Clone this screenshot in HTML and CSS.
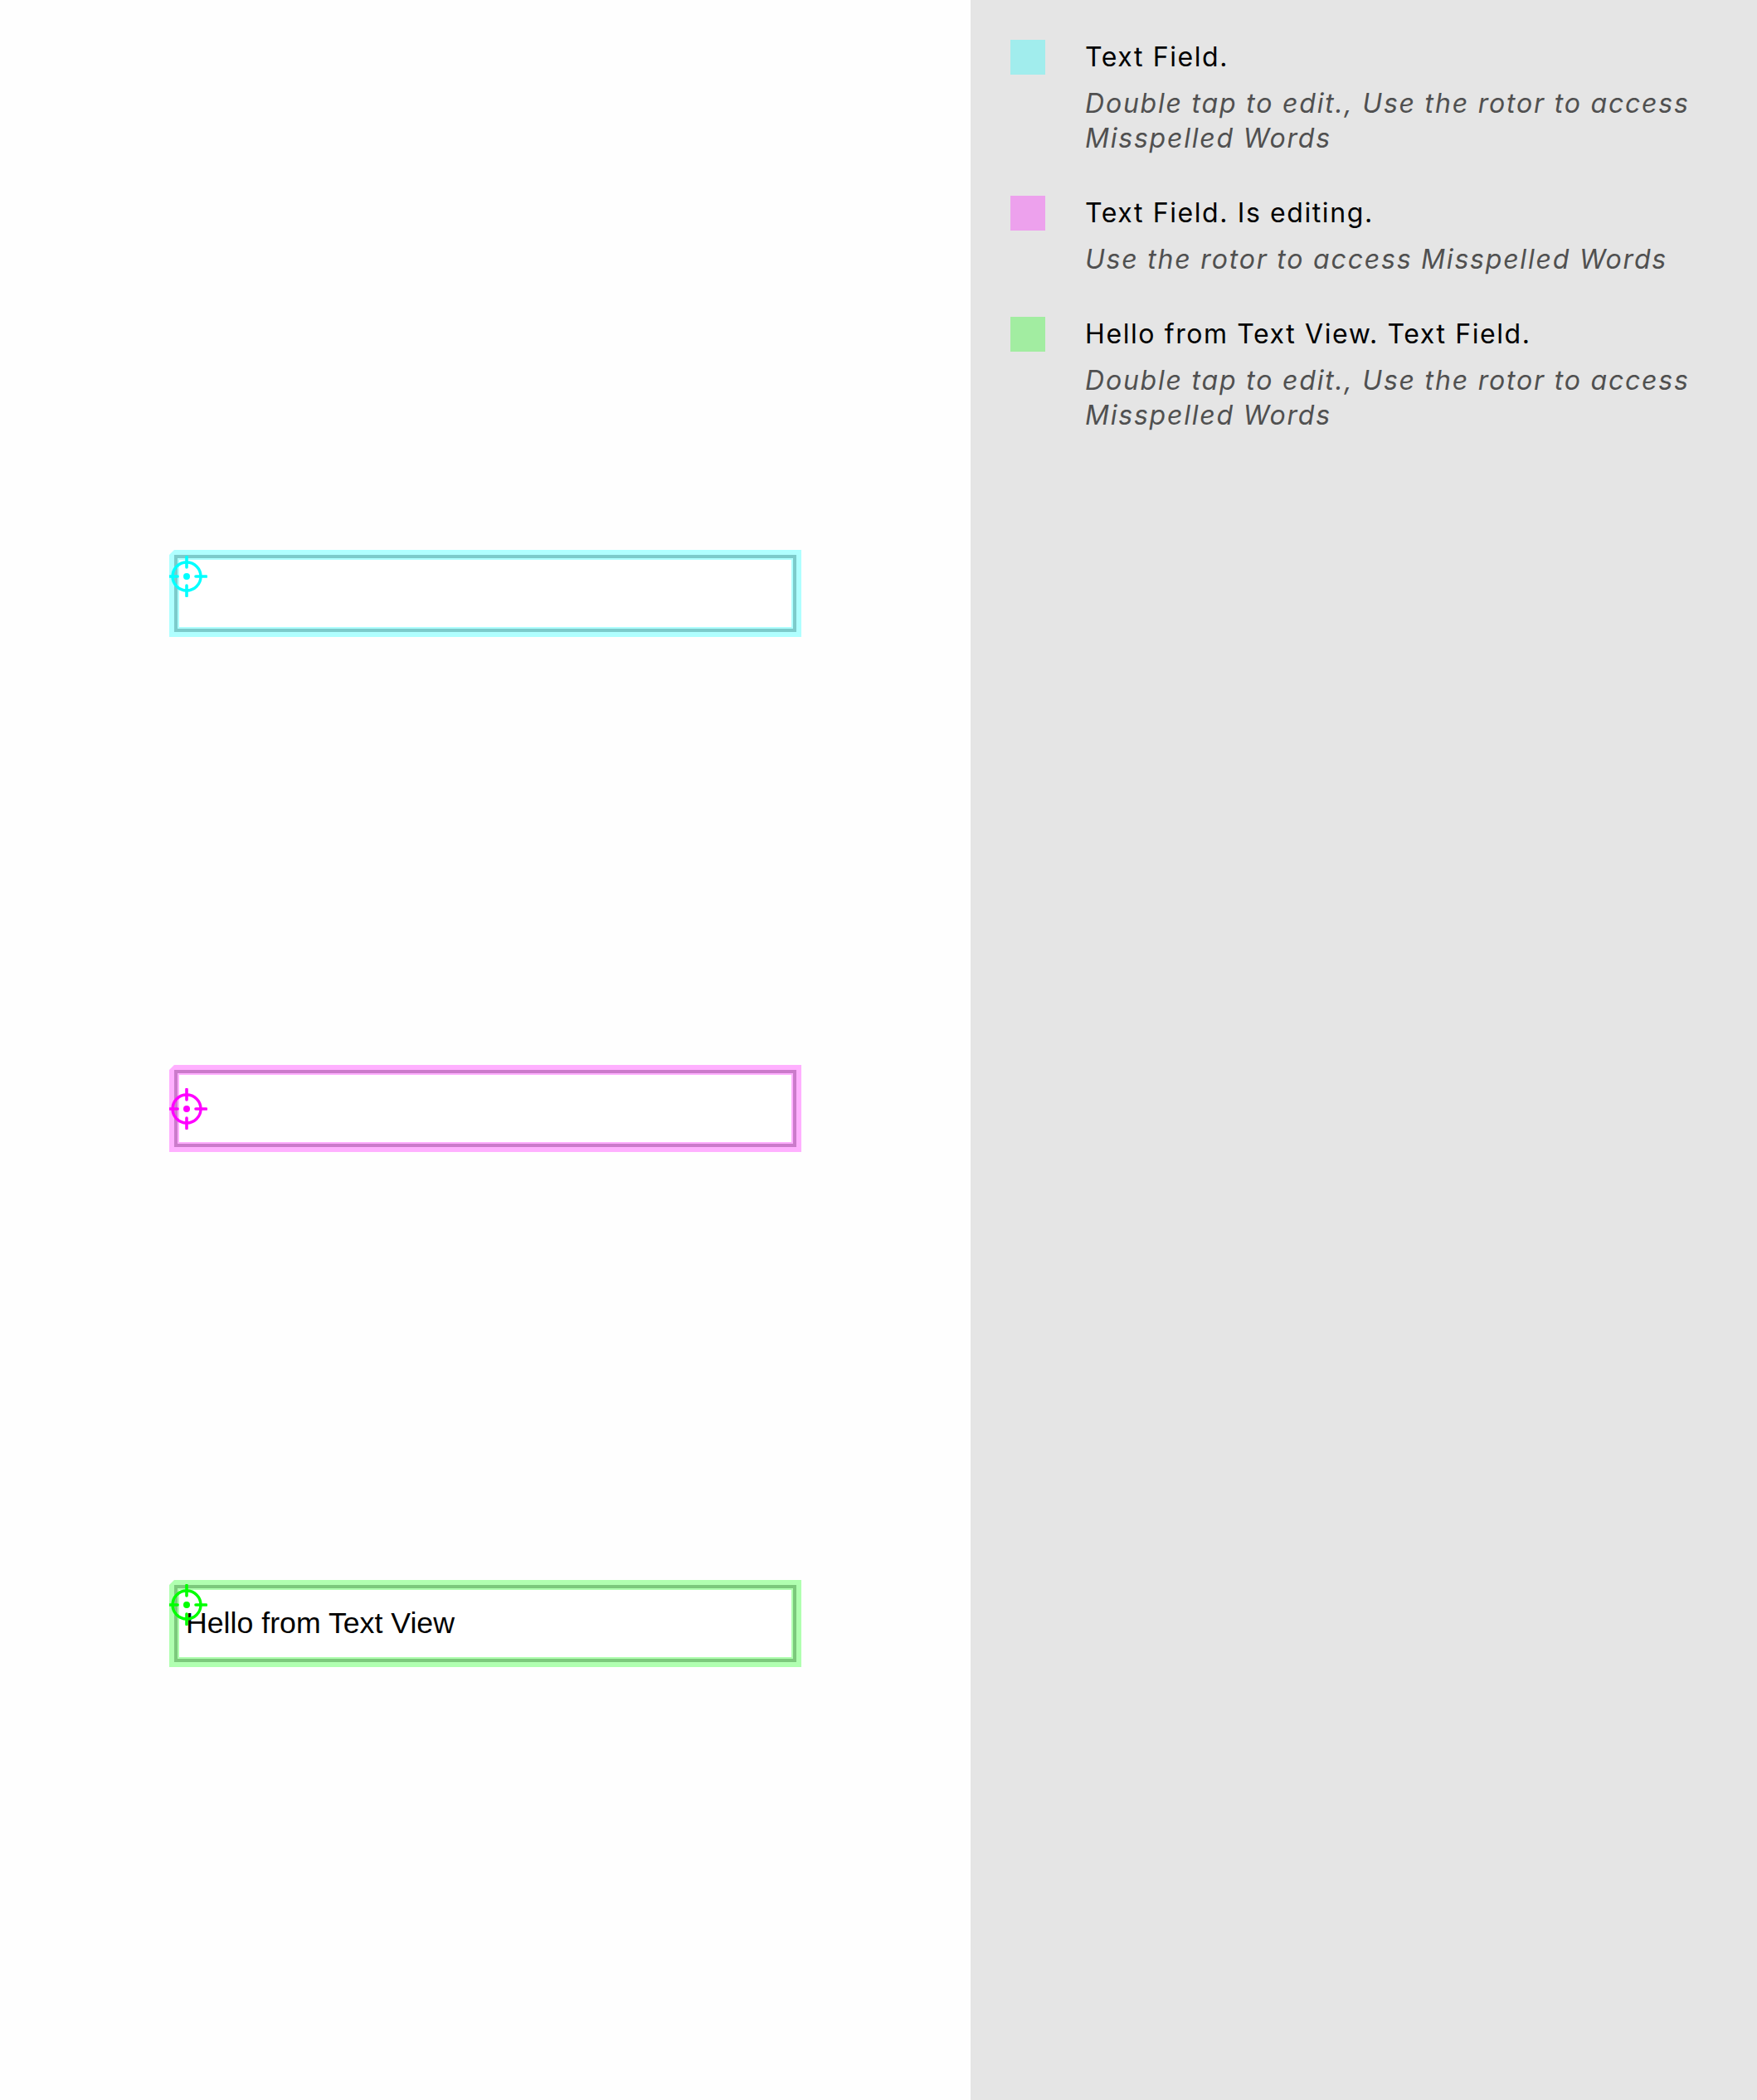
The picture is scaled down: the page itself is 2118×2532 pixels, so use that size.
FILE: index.html
```html
<!DOCTYPE html>
<html lang="en">
<head>
<meta charset="utf-8">
<title>Accessibility Inspector</title>
<link rel="stylesheet" href="styles.css">
</head>
<body>
<main class="canvas">
  <div class="hl hl-cyan">
    <div class="field field-cyan"></div>
    <svg class="target target-cyan" viewBox="0 0 50 50" width="50" height="50">
      <circle cx="25" cy="25" r="17" fill="none" stroke-width="3.4"/>
      <circle cx="25" cy="25" r="4" class="dot"/>
      <path d="M25 1.5V14M25 36V48.5M1.5 25H14M36 25H48.5" fill="none" stroke-width="3.6" stroke-linecap="round"/>
    </svg>
  </div>
  <div class="hl hl-magenta">
    <div class="field field-magenta"></div>
    <svg class="target target-magenta" viewBox="0 0 50 50" width="50" height="50">
      <circle cx="25" cy="25" r="17" fill="none" stroke-width="3.4"/>
      <circle cx="25" cy="25" r="4" class="dot"/>
      <path d="M25 1.5V14M25 36V48.5M1.5 25H14M36 25H48.5" fill="none" stroke-width="3.6" stroke-linecap="round"/>
    </svg>
  </div>
  <div class="hl hl-green">
    <div class="field field-green"><span class="field-text">Hello from Text View</span></div>
    <svg class="target target-green" viewBox="0 0 50 50" width="50" height="50">
      <circle cx="25" cy="25" r="17" fill="none" stroke-width="3.4"/>
      <circle cx="25" cy="25" r="4" class="dot"/>
      <path d="M25 1.5V14M25 36V48.5M1.5 25H14M36 25H48.5" fill="none" stroke-width="3.6" stroke-linecap="round"/>
    </svg>
  </div>
</main>
<aside class="panel">
  <div class="item">
    <div class="swatch swatch-cyan"></div>
    <div class="item-text">
      <div class="item-title">Text Field.</div>
      <div class="item-sub">Double tap to edit., Use the rotor to access Misspelled Words</div>
    </div>
  </div>
  <div class="item">
    <div class="swatch swatch-magenta"></div>
    <div class="item-text">
      <div class="item-title">Text Field. Is editing.</div>
      <div class="item-sub">Use the rotor to access Misspelled Words</div>
    </div>
  </div>
  <div class="item">
    <div class="swatch swatch-green"></div>
    <div class="item-text">
      <div class="item-title">Hello from Text View. Text Field.</div>
      <div class="item-sub">Double tap to edit., Use the rotor to access Misspelled Words</div>
    </div>
  </div>
</aside>
</body>
</html>
```

FILE: styles.css
```css
html, body {
  margin: 0;
  padding: 0;
}

body {
  width: 2118px;
  height: 2532px;
  display: flex;
  overflow: hidden;
  font-family: Inter, "Noto Sans", "Liberation Sans", sans-serif;
}

.canvas {
  width: 1170px;
  flex: none;
  background: #fefefe;
  display: flex;
  flex-direction: column;
  align-items: center;
  padding-top: 663px;
  gap: 516px;
  box-sizing: border-box;
}

.hl {
  position: relative;
  width: 762px;
  height: 105px;
  padding: 6px;
  box-sizing: border-box;
  clip-path: polygon(6px 0, 100% 0, 100% 100%, 0 100%, 0 6px);
}

.hl-cyan { background: #afffff; }
.hl-magenta { background: #ffb0ff; }
.hl-green { background: #b0ffb0; }

.field {
  height: 100%;
  box-sizing: border-box;
  background: #ffffff;
  border: 4px solid;
  display: flex;
  align-items: center;
  padding-left: 10px;
}

.field-cyan { border-color: #7ccbcb; box-shadow: inset 0 0 0 2px #afffff; }
.field-magenta { border-color: #cb7bcb; box-shadow: inset 0 0 0 2px #ffb0ff; }
.field-green { border-color: #7cc97c; box-shadow: inset 0 0 0 2px #b0ffb0; }

.field-text {
  font-family: "Liberation Sans", Arial, sans-serif;
  font-size: 35.7px;
  color: #000;
}

.target {
  position: absolute;
  left: -4px;
}

.target-cyan { top: 7px; stroke: #00ffff; fill: #00ffff; }
.target-magenta { top: 28px; stroke: #ff00ff; fill: #ff00ff; }
.target-green { top: 5px; stroke: #00ff00; fill: #00ff00; }

.target circle[fill="none"] { fill: none; }
.target .dot { stroke: none; }

.panel {
  flex: 1;
  background: #e5e5e5;
  padding: 48px 40px 0 48px;
  display: flex;
  flex-direction: column;
  gap: 48px;
}

.item {
  display: flex;
  gap: 48px;
  align-items: flex-start;
}

.swatch {
  width: 42px;
  height: 42px;
  flex: none;
}

.swatch-cyan { background: #a1eded; }
.swatch-magenta { background: #eda1ed; }
.swatch-green { background: #a2eda1; }

.item-text {
  display: flex;
  flex-direction: column;
  gap: 14px;
}

.item-title {
  font-size: 32px;
  line-height: 42px;
  letter-spacing: 1.6px;
  color: #000;
}

.item-sub {
  font-size: 32px;
  line-height: 42px;
  letter-spacing: 1.8px;
  font-style: italic;
  color: #505050;
}
```
